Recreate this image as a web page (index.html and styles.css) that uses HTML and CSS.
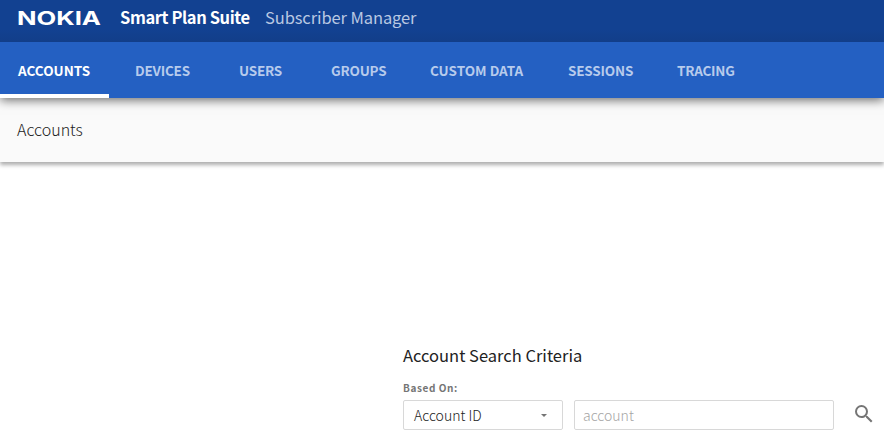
FILE: index.html
```html
<!DOCTYPE html>
<html lang="en">
<head>
<meta charset="utf-8">
<title>Subscriber Manager</title>
<link rel="stylesheet" href="styles.css">
</head>
<body>
<header class="banner">
  <svg class="logo" width="84" height="24" viewBox="0 0 84 24" role="img" aria-label="Nokia"><text x="0" y="19.6" textLength="84" lengthAdjust="spacingAndGlyphs">NOKIA</text></svg>
  <span class="suite">Smart Plan Suite</span>
  <span class="product">Subscriber Manager</span>
</header>
<nav class="tabs">
  <a class="tab active"><span>ACCOUNTS</span></a>
  <a class="tab"><span>DEVICES</span></a>
  <a class="tab"><span>USERS</span></a>
  <a class="tab"><span>GROUPS</span></a>
  <a class="tab wide"><span>CUSTOM DATA</span></a>
  <a class="tab"><span>SESSIONS</span></a>
  <a class="tab"><span>TRACING</span></a>
</nav>
<div class="subheader"><h1>Accounts</h1></div>
<main>
  <section class="search">
    <h2>Account Search Criteria</h2>
    <label class="caption">Based On:</label>
    <div class="row">
      <div class="select"><span>Account ID</span><i class="caret"></i></div>
      <input class="field" type="text" placeholder="account">
      <svg class="find" width="24" height="24" viewBox="0 0 24 24"><path fill="#757575" d="M15.5 14h-.79l-.28-.27A6.47 6.47 0 0 0 16 9.5 6.5 6.5 0 1 0 9.5 16c1.61 0 3.09-.59 4.23-1.57l.27.28v.79l5 4.99L20.49 19l-4.99-5zm-6 0C7.01 14 5 11.99 5 9.5S7.01 5 9.5 5 14 7.01 14 9.5 11.99 14 9.5 14z"/></svg>
    </div>
  </section>
</main>
</body>
</html>
```
FILE: styles.css
```css
* { box-sizing: border-box; }
body {
  margin: 0;
  height: 442px;
  overflow: hidden;
  background: #fff;
  color: #222;
  font-family: "Noto Sans CJK SC", "Noto Sans", sans-serif;
}
.banner {
  position: relative;
  z-index: 3;
  height: 42px;
  display: flex;
  padding: 0 17px;
  background: linear-gradient(#124191 70%, #123e89);
  color: #fff;
  font-size: 16.5px;
  line-height: 35px;
  white-space: nowrap;
}
.logo { margin-top: 5px; flex: none; overflow: visible; }
.logo text { font: 700 18.5px Inter, sans-serif; fill: #fff; }
.suite { width: 145px; margin-left: 19px; font-weight: 700; letter-spacing: -.4px; }
.product { color: #b9c8e2; letter-spacing: -.1px; }
.tabs {
  position: relative;
  z-index: 2;
  height: 56px;
  display: grid;
  grid-template-columns: 109px 104px 92px 99px 138px 109px 1fr;
  grid-template-rows: 56px;
  background: #2460c2;
  box-shadow: 0 2px 10px rgba(0, 0, 0, .6);
}
.tab {
  padding-left: 26px;
  font-size: 13.5px;
  font-weight: 700;
  line-height: 56px;
  letter-spacing: -.2px;
  color: #b7cbec;
  white-space: nowrap;
}
.tab.active { padding-left: 18px; letter-spacing: 0; color: #fff; border-bottom: 4px solid #fff; }
.tab.wide { letter-spacing: 0; }
.subheader {
  position: relative;
  z-index: 1;
  height: 64px;
  padding-left: 17px;
  background: #fafafa;
  box-shadow: 0 3px 4px rgba(0, 0, 0, .32);
}
h1 { margin: 0; font-size: 16px; font-weight: 300; line-height: 63px; }
.search { padding: 182px 0 0 403px; }
h2 { margin: 0; font-size: 16.5px; font-weight: 400; line-height: 23px; }
.caption { display: block; margin-top: 13px; font-size: 10px; font-weight: 700; line-height: 15px; letter-spacing: .6px; color: #757575; }
.row { display: flex; align-items: center; margin-top: 5px; }
.select, .field {
  height: 30px;
  border: 1px solid #d8d8d8;
  border-radius: 2px;
  background: #fff;
  font-family: inherit;
  font-size: 14px;
  font-weight: 300;
}
.select { width: 160px; display: flex; align-items: center; justify-content: space-between; padding: 0 15px 0 10px; line-height: 28px; }
.caret { border: 3px solid transparent; border-top-color: #757575; border-bottom: 0; }
.field { width: 260px; margin-left: 11px; padding: 0 8px; outline: 0; }
.field::placeholder { color: #a5a5a5; }
.find { margin: 0 0 2px 18px; }
```
